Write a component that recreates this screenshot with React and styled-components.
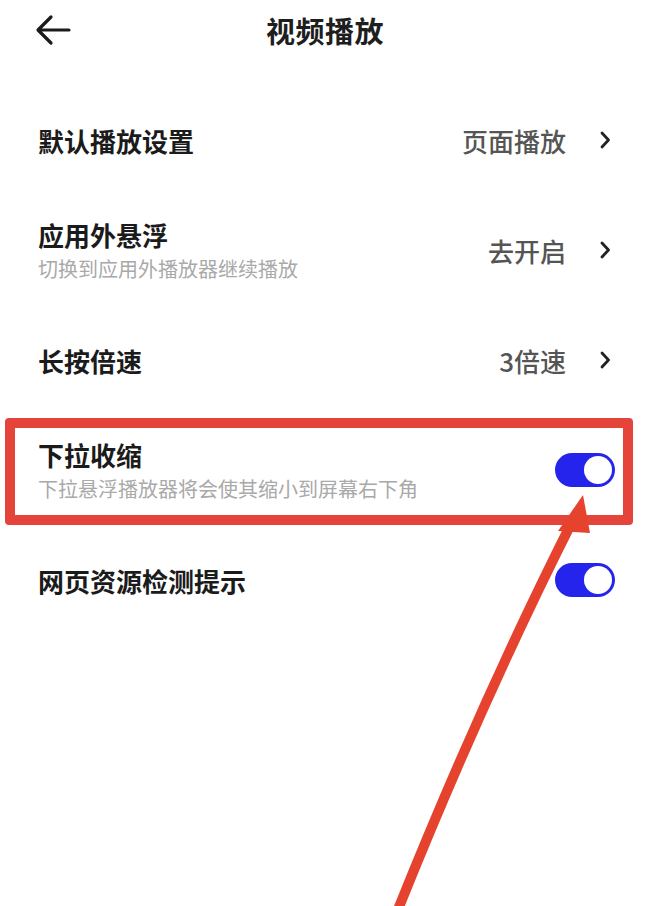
import React from 'react'
import styled, { createGlobalStyle } from 'styled-components'

const GlobalStyle = createGlobalStyle`
    html, body {
        margin: 0;
        padding: 0;
        background: #fff;
    }
    body {
        font-family: "Noto Sans CJK SC", "Noto Sans", sans-serif;
        color: #1b1b1b;
    }
`

const rows = [
    { title: '默认播放设置', value: '页面播放' },
    { title: '应用外悬浮', sub: '切换到应用外播放器继续播放', value: '去开启' },
    { title: '长按倍速', value: '3倍速' },
    { title: '下拉收缩', sub: '下拉悬浮播放器将会使其缩小到屏幕右下角', toggle: true },
    { title: '网页资源检测提示', toggle: true },
]

function BackIcon() {
    return (
        <svg width="36" height="32" viewBox="0 0 36 32" fill="none">
            <path d="M34 16H4M16 3L3 16l13 13" stroke="#1b1b1b" strokeWidth="3.2" strokeLinecap="round" strokeLinejoin="round" />
        </svg>
    )
}

function Chevron() {
    return (
        <svg width="12" height="20" viewBox="0 0 12 20" fill="none">
            <path d="M3 3l6.5 7-6.5 7" stroke="#222" strokeWidth="2.8" strokeLinecap="round" strokeLinejoin="round" />
        </svg>
    )
}

function App() {
    return (
        <Page>
            <GlobalStyle />
            <Header>
                <BackButton><BackIcon /></BackButton>
                <Title>视频播放</Title>
            </Header>
            <List>
                {rows.map((r) => (
                    <Row key={r.title}>
                        <Labels>
                            <RowTitle>{r.title}</RowTitle>
                            {r.sub && <RowSub>{r.sub}</RowSub>}
                        </Labels>
                        {r.toggle ? (
                            <Toggle><Knob /></Toggle>
                        ) : (
                            <Action>
                                <Value>{r.value}</Value>
                                <Chevron />
                            </Action>
                        )}
                    </Row>
                ))}
            </List>
            <Highlight />
            <Arrow width="650" height="906" viewBox="0 0 650 906">
                <path d="M397 912 Q 482 700 574 518" stroke="#e6432f" strokeWidth="10" fill="none" />
                <polygon points="583,495 558,531 590,533" fill="#e6432f" />
            </Arrow>
        </Page>
    )
}

const Page = styled.div`
    position: relative;
    width: 650px;
    height: 906px;
    overflow: hidden;
    background: #fff;
`

const Header = styled.header`
    position: relative;
    height: 60px;
    display: flex;
    align-items: center;
    justify-content: center;
`

const BackButton = styled.div`
    position: absolute;
    left: 35px;
    top: 14px;
    display: flex;
`

const Title = styled.h1`
    margin: 0;
    font-size: 29px;
    font-weight: 700;
    color: #1e1e1e;
    letter-spacing: 0.5px;
`

const List = styled.div`
    padding: 25px 37px 0 38px;
    display: flex;
    flex-direction: column;
`

const Row = styled.div`
    height: 110px;
    display: flex;
    align-items: center;
    justify-content: space-between;
`

const Labels = styled.div`
    display: flex;
    flex-direction: column;
    gap: 6px;
`

const RowTitle = styled.div`
    font-size: 26px;
    font-weight: 700;
    line-height: 31px;
    color: #1b1b1b;
`

const RowSub = styled.div`
    font-size: 20px;
    line-height: 26px;
    color: #a9a9a9;
`

const Action = styled.div`
    display: flex;
    align-items: center;
    gap: 33px;
    padding-right: 2px;
`

const Value = styled.div`
    font-size: 26px;
    font-weight: 500;
    color: #555;
`

const Toggle = styled.div`
    width: 60px;
    height: 34px;
    border-radius: 17px;
    background: #2424ec;
    display: flex;
    align-items: center;
    justify-content: flex-end;
    padding: 0 3px;
    box-sizing: border-box;
    margin-right: -2px;
`

const Knob = styled.div`
    width: 28px;
    height: 28px;
    border-radius: 50%;
    background: #fff;
`

const Highlight = styled.div`
    position: absolute;
    left: 5px;
    top: 418px;
    width: 628px;
    height: 107px;
    box-sizing: border-box;
    border: 10px solid #e5443a;
    border-radius: 4px;
    pointer-events: none;
`

const Arrow = styled.svg`
    position: absolute;
    left: 0;
    top: 0;
    pointer-events: none;
`

export default App
